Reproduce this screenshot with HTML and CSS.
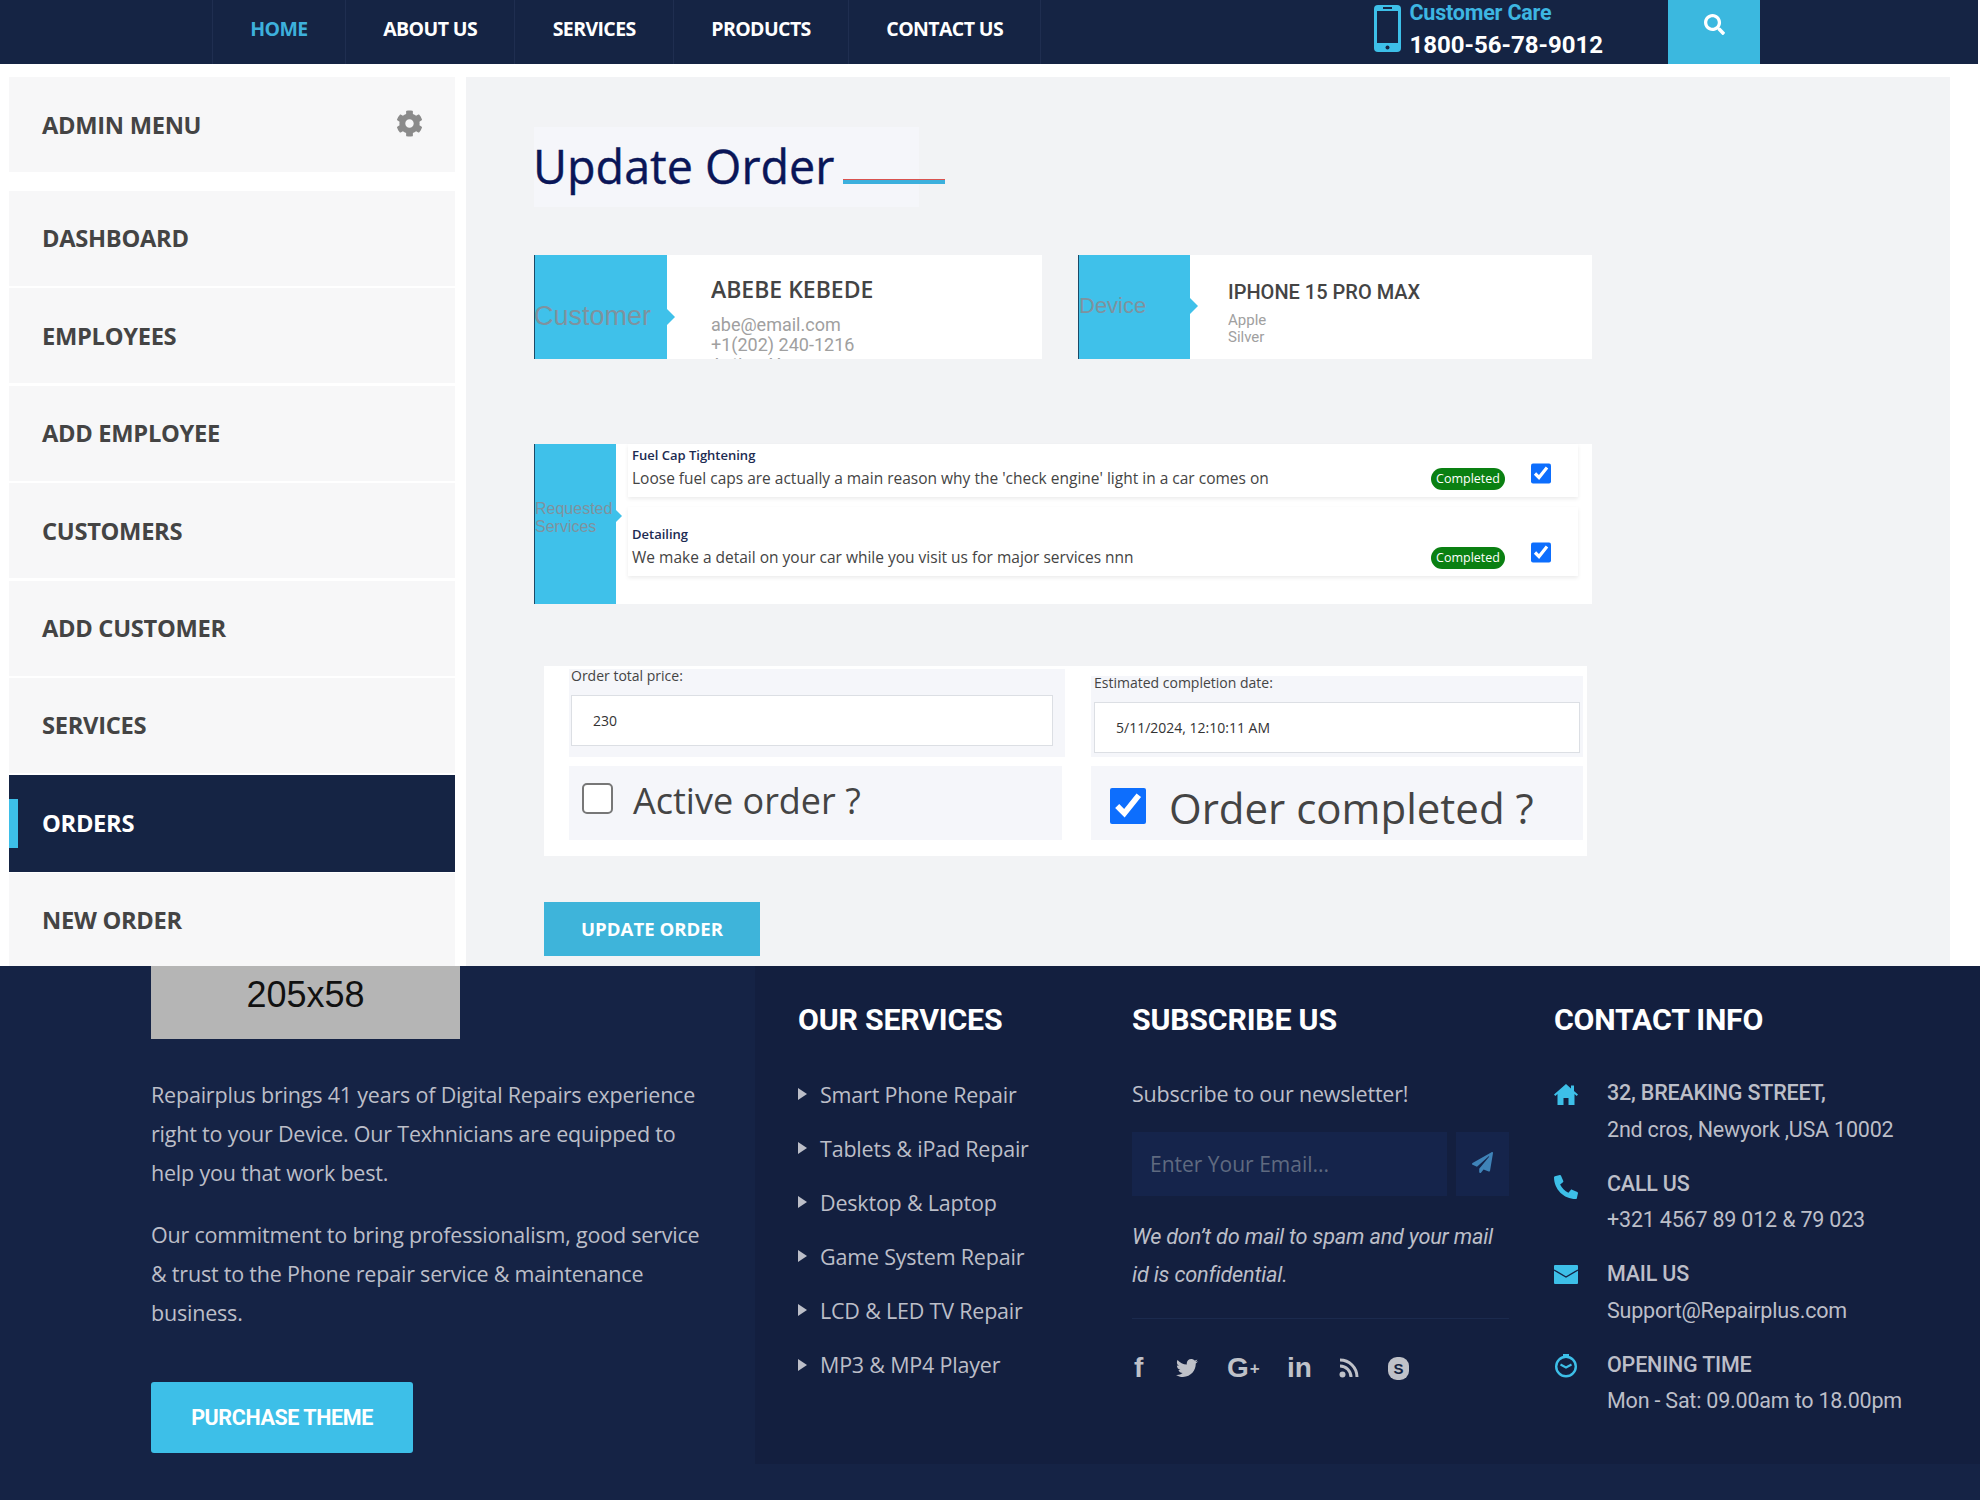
FILE: index.html
```html
<!DOCTYPE html>
<html>
<head>
    <title>Update Order</title>
    <link rel="stylesheet" href="styles.css">
</head>
<body>

    <header class="topbar">
        <nav class="topnav">
            <a class="topnav-item active" href="#">HOME</a>
            <a class="topnav-item" href="#">ABOUT US</a>
            <a class="topnav-item" href="#">SERVICES</a>
            <a class="topnav-item" href="#">PRODUCTS</a>
            <a class="topnav-item" href="#">CONTACT US</a>
        </nav>
        <div class="care">
            <svg class="care-icon" viewBox="0 0 27 47">
                <rect width="27" height="47" rx="4" fill="#3dbfe8"/>
                <rect x="3" y="6" width="21" height="32" fill="#152444"/>
                <rect x="9" y="2" width="9" height="2" fill="#152444"/>
                <circle cx="13.5" cy="42.5" r="2" fill="#152444"/>
            </svg>
            <div>
                <div class="care-label">Customer Care</div>
                <div class="care-number">1800-56-78-9012</div>
            </div>
        </div>
        <button class="search-btn">
            <svg viewBox="0 0 512 512" width="21" height="21"><path fill="#fff" d="M505 442.7L405.3 343c-4.5-4.5-10.6-7-17-7H372c27.6-35.3 44-79.7 44-128C416 93.1 322.9 0 208 0S0 93.1 0 208s93.1 208 208 208c48.3 0 92.7-16.4 128-44v16.3c0 6.4 2.5 12.5 7 17l99.7 99.7c9.4 9.4 24.6 9.4 33.9 0l28.3-28.3c9.4-9.4 9.4-24.6.1-34zM208 336c-70.7 0-128-57.2-128-128 0-70.7 57.2-128 128-128 70.7 0 128 57.2 128 128 0 70.7-57.2 128-128 128z"/></svg>
        </button>
    </header>

    <div class="page">
        <aside class="sidebar">
            <div class="admin-head">
                <span>ADMIN MENU</span>
                <svg viewBox="0 0 512 512" width="27" height="27"><path fill="#8b8b8b" d="M487.4 315.7l-42.6-24.6c4.3-23.2 4.3-47 0-70.2l42.6-24.6c4.9-2.8 7.1-8.6 5.5-14-11.1-35.6-30-67.8-54.7-94.6-3.8-4.1-10-5.1-14.8-2.3L380.8 110c-17.9-15.4-38.5-27.3-60.8-35.1V25.8c0-5.6-3.9-10.5-9.4-11.7-36.7-8.2-74.3-7.8-109.2 0-5.5 1.2-9.4 6.1-9.4 11.7V75c-22.2 7.9-42.8 19.8-60.8 35.1L88.7 85.5c-4.9-2.8-11-1.9-14.8 2.3-24.7 26.7-43.6 58.9-54.7 94.6-1.7 5.4.6 11.2 5.5 14L67.3 221c-4.3 23.2-4.3 47 0 70.2l-42.6 24.6c-4.9 2.8-7.1 8.6-5.5 14 11.1 35.6 30 67.8 54.7 94.6 3.8 4.1 10 5.1 14.8 2.3l42.6-24.6c17.9 15.4 38.5 27.3 60.8 35.1v49.2c0 5.6 3.9 10.5 9.4 11.7 36.7 8.2 74.3 7.8 109.2 0 5.5-1.2 9.4-6.1 9.4-11.7v-49.2c22.2-7.9 42.8-19.8 60.8-35.1l42.6 24.6c4.9 2.8 11 1.9 14.8-2.3 24.7-26.7 43.6-58.9 54.7-94.6 1.5-5.5-.7-11.3-5.6-14.1zM256 336c-44.1 0-80-35.9-80-80s35.9-80 80-80 80 35.9 80 80-35.9 80-80 80z"/></svg>
            </div>
            <a class="side-item" href="#">DASHBOARD</a>
            <a class="side-item" href="#">EMPLOYEES</a>
            <a class="side-item" href="#">ADD EMPLOYEE</a>
            <a class="side-item" href="#">CUSTOMERS</a>
            <a class="side-item" href="#">ADD CUSTOMER</a>
            <a class="side-item" href="#">SERVICES</a>
            <a class="side-item current" href="#">ORDERS</a>
            <a class="side-item" href="#">NEW ORDER</a>
        </aside>

        <main class="content">
            <div class="title-box">
                <h2>Update Order</h2>
                <span class="title-line"></span>
            </div>

            <div class="info-row">
                <section class="info-card customer">
                    <div class="tag tag-customer">Customer</div>
                    <div class="info-body">
                        <h3>ABEBE KEBEDE</h3>
                        <p>abe@email.com</p>
                        <p>+1(202) 240-1216</p>
                        <p>Active: Yes</p>
                    </div>
                </section>
                <section class="info-card device">
                    <div class="tag tag-device">Device</div>
                    <div class="info-body">
                        <h3>IPHONE 15 PRO MAX</h3>
                        <p>Apple</p>
                        <p>Silver</p>
                    </div>
                </section>
            </div>

            <section class="services-card">
                <div class="tag tag-services">Requested<br>Services</div>
                <div class="service-list">
                    <div class="service first">
                        <div class="service-text">
                            <h4>Fuel Cap Tightening</h4>
                            <p>Loose fuel caps are actually a main reason why the 'check engine' light in a car comes on</p>
                        </div>
                        <span class="badge">Completed</span>
                        <input class="service-check" type="checkbox" checked>
                    </div>
                    <div class="service second">
                        <div class="service-text">
                            <h4>Detailing</h4>
                            <p>We make a detail on your car while you visit us for major services nnn</p>
                        </div>
                        <span class="badge">Completed</span>
                        <input class="service-check" type="checkbox" checked>
                    </div>
                </div>
            </section>

            <form class="order-form">
                <div class="field field-price">
                    <label>Order total price:</label>
                    <input type="text" value="230">
                </div>
                <div class="field field-date">
                    <label>Estimated completion date:</label>
                    <input type="text" value="5/11/2024, 12:10:11 AM">
                </div>
                <label class="toggle toggle-active">
                    <input type="checkbox">
                    <span>Active order ?</span>
                </label>
                <label class="toggle toggle-done">
                    <input type="checkbox" checked>
                    <span>Order completed ?</span>
                </label>
            </form>

            <button class="update-btn">UPDATE ORDER</button>
        </main>
    </div>

    <footer class="footer">
        <div class="footer-about">
            <div class="logo-box">205x58</div>
            <p>Repairplus brings 41 years of Digital Repairs experience right to your Device. Our Texhnicians are equipped to help you that work best.</p>
            <p class="about-second">Our commitment to bring professionalism, good service &amp; trust to the Phone repair service &amp; maintenance business.</p>
            <a class="purchase-btn" href="#">PURCHASE THEME</a>
        </div>

        <div class="footer-panel">
            <div class="footer-services">
                <h3>OUR SERVICES</h3>
                <ul>
                    <li>Smart Phone Repair</li>
                    <li>Tablets &amp; iPad Repair</li>
                    <li>Desktop &amp; Laptop</li>
                    <li>Game System Repair</li>
                    <li>LCD &amp; LED TV Repair</li>
                    <li>MP3 &amp; MP4 Player</li>
                </ul>
            </div>

            <div class="footer-subscribe">
                <h3>SUBSCRIBE US</h3>
                <p class="sub-lead">Subscribe to our newsletter!</p>
                <div class="sub-form">
                    <input type="text" placeholder="Enter Your Email...">
                    <button>
                        <svg viewBox="0 0 512 512" width="21" height="21"><path fill="#3f83b8" d="M476 3.2L12.5 270.6c-18.1 10.4-15.8 35.6 2.2 43.2L121 358.4l287.3-253.2c5.5-4.9 13.3 2.6 8.6 8.3L176 407v80.5c0 23.6 28.5 32.9 42.5 15.8L282 426l124.6 52.2c14.2 6 30.4-2.9 33-18.2l72-432C515 7.8 493.3-6.8 476 3.2z"/></svg>
                    </button>
                </div>
                <p class="sub-note">We don’t do mail to spam and your mail id is confidential.</p>
                <div class="social">
                    <span class="social-f">f</span>
                    <svg class="social-tw" viewBox="0 0 512 512" width="22" height="22"><path fill="#bfc1c8" d="M459.37 151.716c.325 4.548.325 9.097.325 13.645 0 138.72-105.583 298.558-298.558 298.558-59.452 0-114.68-17.219-161.137-47.106 8.447.974 16.568 1.299 25.34 1.299 49.055 0 94.213-16.568 130.274-44.832-46.132-.975-84.792-31.188-98.112-72.772 6.498.974 12.995 1.624 19.818 1.624 9.421 0 18.843-1.3 27.614-3.573-48.081-9.747-84.143-51.98-84.143-102.985v-1.299c13.969 7.797 30.214 12.67 47.431 13.319-28.264-18.843-46.781-51.005-46.781-87.391 0-19.492 5.197-37.36 14.294-52.954 51.655 63.675 129.3 105.258 216.365 109.807-1.624-7.797-2.599-15.918-2.599-24.04 0-57.828 46.782-104.934 104.934-104.934 30.213 0 57.502 12.67 76.67 33.137 23.715-4.548 46.456-13.32 66.599-25.34-7.798 24.366-24.366 44.833-46.132 57.827 21.117-2.273 41.584-8.122 60.426-16.243-14.292 20.791-32.161 39.308-52.628 54.253z"/></svg>
                    <span class="social-g">G<span class="social-plus">+</span></span>
                    <span class="social-in">in</span>
                    <svg class="social-rss" viewBox="0 0 20 20" width="20" height="20">
                        <circle cx="3.5" cy="16.5" r="3" fill="#bfc1c8"/>
                        <path fill="none" stroke="#bfc1c8" stroke-width="3" d="M1 8a11 11 0 0 1 11 11M1 2a17 17 0 0 1 17 17"/>
                    </svg>
                    <span class="social-sk">S</span>
                </div>
            </div>

            <div class="footer-contact">
                <h3>CONTACT INFO</h3>
                <div class="contact-row">
                    <svg viewBox="0 0 24 21" width="24" height="21"><path fill="#3dbfe8" d="M12 0L0 10.5l1.3 1.5L3.5 10v11h6v-7h5v7h6V10l2.2 2 1.3-1.5L20 7V1.5h-3v3z"/></svg>
                    <div><strong>32, BREAKING STREET,</strong><br>2nd cros, Newyork ,USA 10002</div>
                </div>
                <div class="contact-row">
                    <svg viewBox="0 0 512 512" width="24" height="24"><g transform="translate(512 0) scale(-1 1)"><path fill="#3dbfe8" d="M493.4 24.6l-104-24c-11.3-2.6-22.9 3.3-27.5 13.9l-48 112c-4.2 9.8-1.4 21.3 6.9 28l60.6 49.6c-36 76.7-98.9 140.5-177.2 177.2l-49.6-60.6c-6.8-8.3-18.2-11.1-28-6.9l-112 48C3.9 366.5-2 378.1.6 389.4l24 104C27.1 504.2 36.7 512 48 512c256.1 0 464-207.5 464-464 0-11.2-7.7-20.9-18.6-23.4z"/></g></svg>
                    <div><strong>CALL US</strong><br>+321 4567 89 012 &amp; 79 023</div>
                </div>
                <div class="contact-row">
                    <svg viewBox="0 0 24 19" width="24" height="19">
                        <rect width="24" height="19" rx="1" fill="#3dbfe8"/>
                        <path fill="none" stroke="#152345" stroke-width="1.4" d="M0 5l12 7 12-7"/>
                    </svg>
                    <div><strong>MAIL US</strong><br>Support@Repairplus.com</div>
                </div>
                <div class="contact-row">
                    <svg viewBox="0 0 24 24" width="24" height="24">
                        <circle cx="12" cy="12.5" r="9.8" fill="none" stroke="#3dbfe8" stroke-width="2.4"/>
                        <path fill="none" stroke="#3dbfe8" stroke-width="2" d="M6.5 10.5l5.5 3 5.5-3"/>
                        <rect x="9" y="0" width="6" height="2" fill="#3dbfe8"/>
                    </svg>
                    <div><strong>OPENING TIME</strong><br>Mon - Sat: 09.00am to 18.00pm</div>
                </div>
            </div>
        </div>
    </footer>

</body>
</html>
```

FILE: styles.css
```css
* {
    box-sizing: border-box;
}

body {
    margin: 0;
    background-color: #fff;
    font-family: "Open Sans", sans-serif;
}

a {
    text-decoration: none;
}

h2, h3, h4, p {
    margin: 0;
}

/* top bar */
.topbar {
    display: flex;
    height: 64px;
    margin-right: 2px;
    padding-left: 212px;
    background-color: #152444;
}

.topnav {
    display: flex;
    width: 1162px;
}

.topnav-item {
    display: flex;
    justify-content: center;
    height: 64px;
    padding: 0 37.3px;
    border-left: 1px solid #1f2e50;
    color: #fff;
    font-size: 19.5px;
    font-weight: 700;
    letter-spacing: -0.6px;
    line-height: 58px;
}

.topnav-item:nth-child(5) {
    border-right: 1px solid #1f2e50;
}

.topnav-item.active {
    color: #3db0dc;
}

.care {
    display: flex;
    gap: 8.5px;
    width: 294px;
    padding-top: 5px;
}

.care-icon {
    width: 27px;
    height: 47px;
}

.care-label {
    margin-top: -5px;
    color: #3db6e2;
    font-family: Roboto, sans-serif;
    font-size: 21.5px;
    font-weight: 700;
    line-height: 25px;
    letter-spacing: -0.2px;
}

.care-number {
    margin-top: 5px;
    color: #fff;
    font-family: Roboto, sans-serif;
    font-size: 24px;
    font-weight: 700;
    line-height: 30px;
}

.search-btn {
    width: 92px;
    height: 64px;
    padding: 0 0 12px;
    border: none;
    background-color: #3bb8df;
}

/* sidebar + main */
.page {
    display: flex;
    height: 902px;
    padding: 13px 0 0 9px;
    overflow: hidden;
}

.sidebar {
    display: flex;
    flex-direction: column;
    gap: 2.4px;
    width: 446px;
    flex-shrink: 0;
}

.admin-head {
    display: flex;
    align-items: center;
    justify-content: space-between;
    flex-shrink: 0;
    height: 95px;
    margin-bottom: 16.6px;
    padding: 0 32px 0 33px;
    background-color: #f7f7f8;
    color: #444;
    font-size: 23.7px;
    font-weight: 700;
    letter-spacing: -0.3px;
}

.admin-head svg {
    margin-bottom: 3px;
}

.side-item {
    display: flex;
    align-items: center;
    flex-shrink: 0;
    height: 95px;
    padding-left: 33px;
    background-color: #f7f7f8;
    color: #444;
    font-size: 23.7px;
    font-weight: 700;
    letter-spacing: -0.3px;
}

.side-item.current {
    position: relative;
    height: 96.5px;
    margin-bottom: -1.5px;
    padding-bottom: 1px;
    background-color: #152444;
    color: #fff;
}

.side-item.current::before {
    content: "";
    position: absolute;
    left: 0;
    top: 24px;
    width: 9px;
    height: 49px;
    background-color: #3dbfe8;
}

.content {
    width: 1484px;
    margin-left: 11px;
    padding: 50px 0 0 68px;
    background-color: #f2f3f5;
}

.title-box {
    display: flex;
    align-items: center;
    width: 385px;
    height: 80px;
    padding-bottom: 2px;
    background-color: #f5f6fa;
}

.title-box h2 {
    flex-shrink: 0;
    margin-left: -1px;
    color: #0a1658;
    font-size: 46.7px;
    font-weight: 400;
    white-space: nowrap;
    -webkit-text-stroke: 0.4px #0a1658;
}

.title-line {
    flex-shrink: 0;
    width: 102px;
    height: 5px;
    margin: 30px 0 0 9px;
    border-top: 1px solid #d9534f;
    background-color: #3cb0dd;
}

/* customer + device cards */
.info-row {
    display: flex;
    gap: 36px;
    margin-top: 48px;
}

.info-card {
    display: flex;
    height: 104px;
    overflow: hidden;
    background-color: #fff;
}

.customer {
    width: 508px;
}

.device {
    width: 514px;
}

.tag {
    position: relative;
    flex-shrink: 0;
    border-left: 1px solid #1c4a66;
    background-color: #3fc1ea;
    color: #7f929e;
    font-family: "Liberation Sans", sans-serif;
}

.tag::after {
    content: "";
    position: absolute;
    left: 100%;
    border: 8px solid transparent;
    border-left-color: #3fc1ea;
    border-right-width: 0;
}

.tag-customer {
    width: 133px;
    padding-top: 45px;
    font-size: 27px;
    line-height: 32px;
    text-indent: -1px;
}

.tag-customer::after {
    top: 54px;
}

.tag-device {
    width: 112px;
    padding-top: 38px;
    font-size: 22px;
    line-height: 26px;
}

.tag-device::after {
    top: 43px;
}

.info-body {
    margin-left: 44px;
    padding-top: 21px;
    overflow: hidden;
    color: #a0a0a0;
    font-family: Roboto, sans-serif;
}

.customer .info-body {
    font-size: 18px;
    line-height: 20px;
}

.customer .info-body h3 {
    margin-bottom: 13px;
    color: #444;
    font-family: "Open Sans", sans-serif;
    font-size: 23px;
    font-weight: 600;
    line-height: 26px;
}

.device .info-body {
    margin-left: 38px;
    padding-top: 25px;
    font-size: 15px;
    line-height: 17px;
}

.device .info-body h3 {
    margin-bottom: 8px;
    color: #444;
    font-size: 20px;
    font-weight: 500;
    line-height: 24px;
}

/* requested services */
.services-card {
    display: flex;
    width: 1058px;
    height: 160px;
    margin-top: 85px;
    background-color: #fff;
}

.tag-services {
    width: 82px;
    padding-top: 56px;
    font-size: 16px;
    line-height: 18px;
}

.tag-services::after {
    top: 66px;
    border-width: 6px;
    border-right-width: 0;
}

.service-list {
    width: 950px;
    margin-left: 12px;
}

.service {
    display: flex;
    align-items: flex-end;
    padding: 2px 27px 7px 4px;
    box-shadow: 0 2px 4px rgba(0, 0, 0, 0.08);
    background-color: #fff;
}

.service.first {
    height: 53px;
}

.service.second {
    height: 69px;
    margin-top: 10px;
    padding-top: 18px;
}

.service-text {
    flex: 1;
    align-self: flex-start;
}

.service h4 {
    color: #1c2b52;
    font-size: 13px;
    font-weight: 600;
    line-height: 18px;
}

.service p {
    margin-top: 2px;
    color: #444;
    font-size: 15.5px;
    line-height: 24px;
}

.badge {
    width: 74px;
    height: 22px;
    border-radius: 11px;
    background-color: #0a8012;
    color: #fff;
    font-size: 12.5px;
    line-height: 22px;
    text-align: center;
}

.service-check {
    width: 20px;
    height: 21px;
    margin: 0 0 6px 26px;
    accent-color: #0d6efd;
}

/* order form */
.order-form {
    display: grid;
    grid-template-columns: 496px 492px;
    align-content: start;
    align-items: end;
    column-gap: 26px;
    row-gap: 9px;
    width: 1043px;
    height: 190px;
    margin: 62px 0 0 10px;
    padding: 3px 0 0 25px;
    background-color: #fff;
}

.field {
    background-color: #f5f6fa;
    font-size: 14px;
}

.field label {
    display: block;
    height: 26px;
    color: #444;
    line-height: 13px;
}

.field input {
    display: block;
    width: 100%;
    height: 51px;
    padding: 0 0 0 21px;
    border: 1px solid #dcdfe4;
    background-color: #fff;
    color: #333;
    font-family: "Open Sans", sans-serif;
    font-size: 14px;
}

.field-price {
    padding: 0 12px 11px 2px;
}

.field-date {
    padding: 0 3px 4px 3px;
}

.toggle {
    display: flex;
    align-items: center;
    height: 74px;
    background-color: #f5f6fa;
    color: #444;
}

.toggle-active {
    width: 493px;
    padding-left: 13px;
    font-size: 36px;
}

.toggle-active input {
    width: 31px;
    height: 31px;
    margin: 0 20px 10px 0;
    border: 2px solid #777;
    border-radius: 5px;
    background-color: #fff;
    appearance: none;
}

.toggle-active span {
    margin-bottom: 6px;
}

.toggle-done {
    padding-left: 19px;
    font-size: 42px;
}

.toggle-done input {
    width: 36px;
    height: 36px;
    margin: 6px 23px 0 0;
    accent-color: #0d6efd;
}

.toggle-done span {
    margin-top: 8px;
}

.update-btn {
    width: 216px;
    height: 54px;
    margin: 46px 0 0 10px;
    padding-bottom: 3px;
    border: none;
    background-color: #3eb4da;
    color: #fff;
    font-family: "Open Sans", sans-serif;
    font-size: 18.6px;
    font-weight: 700;
}

/* footer */
.footer {
    display: flex;
    height: 534px;
    background-color: #152345;
    color: #bcbec8;
}

.footer-about {
    width: 755px;
    padding-left: 151px;
    font-size: 21.5px;
    line-height: 39px;
}

.footer-about p {
    width: 560px;
    letter-spacing: -0.2px;
}

.logo-box {
    width: 309px;
    height: 72.5px;
    margin-bottom: 36px;
    background-color: #b5b5b5;
    color: #111;
    font-family: "Liberation Sans", sans-serif;
    font-size: 36px;
    line-height: 58px;
    text-align: center;
}

.about-second {
    margin-top: 23px;
}

.purchase-btn {
    display: block;
    width: 262px;
    height: 71.5px;
    margin-top: 50px;
    border-radius: 3px;
    background-color: #3dbfe8;
    color: #fff;
    font-family: Roboto, sans-serif;
    font-size: 21.5px;
    font-weight: 700;
    letter-spacing: -0.4px;
    line-height: 71px;
    text-align: center;
}

.footer-panel {
    display: flex;
    flex: 1;
    height: 498px;
    padding: 34px 0 0 43px;
    background-color: #131f3f;
}

.footer-panel h3 {
    color: #fff;
    font-family: Roboto, sans-serif;
    font-size: 30.3px;
    font-weight: 700;
    line-height: 40px;
    letter-spacing: -0.2px;
}

.footer-services {
    width: 334px;
}

.footer-services ul {
    margin: 27px 0 0;
    padding: 0;
    list-style-type: none;
}

.footer-services li {
    display: flex;
    align-items: center;
    height: 54.1px;
    font-size: 21.5px;
    letter-spacing: -0.2px;
}

.footer-services li::before {
    content: "";
    margin-right: 13px;
    border: 6px solid transparent;
    border-left: 9px solid #bcbec8;
    border-right-width: 0;
}

.footer-subscribe {
    width: 377px;
}

.sub-lead {
    margin-top: 27px;
    font-size: 21.5px;
    line-height: 54px;
    letter-spacing: -0.2px;
}

.sub-form {
    display: flex;
    gap: 8.5px;
    margin-top: 11px;
}

.sub-form input {
    width: 315px;
    height: 64px;
    padding: 0 0 0 18px;
    border: none;
    background-color: #15244b;
    font-family: "Open Sans", sans-serif;
    font-size: 21px;
}

.sub-form input::placeholder {
    color: #5f6a80;
}

.sub-form button {
    width: 53.5px;
    height: 64px;
    padding: 0;
    border: none;
    background-color: #15244b;
}

.sub-note {
    margin-top: 22px;
    padding-bottom: 24px;
    border-bottom: 1px solid #1b2a4e;
    font-family: Roboto, sans-serif;
    font-size: 21.7px;
    font-style: italic;
    line-height: 38px;
    letter-spacing: -0.2px;
}

.social {
    display: flex;
    align-items: center;
    height: 26px;
    margin-top: 36px;
    padding-left: 2px;
    color: #bfc1c8;
    font-family: "Liberation Sans", sans-serif;
    font-weight: 700;
    line-height: 26px;
}

.social-f {
    width: 42px;
    font-size: 28px;
}

.social-tw {
    margin-right: 29px;
}

.social-g {
    width: 60px;
    font-size: 28px;
}

.social-plus {
    margin-left: 1px;
    font-size: 17px;
    vertical-align: 3px;
}

.social-in {
    width: 52px;
    font-size: 28px;
}

.social-rss {
    margin-right: 29px;
}

.social-sk {
    width: 21px;
    height: 23px;
    border-radius: 9px;
    background-color: #bfc1c8;
    color: #131f3f;
    font-size: 15px;
    line-height: 23px;
    text-align: center;
}

.footer-contact {
    margin-left: 45px;
    font-family: Roboto, sans-serif;
    font-size: 21.5px;
    line-height: 36.5px;
}

.footer-contact h3 {
    margin-bottom: 35px;
}

.contact-row {
    display: flex;
    gap: 29px;
    height: 73px;
    margin-bottom: 17.5px;
    letter-spacing: -0.2px;
}

.contact-row svg {
    flex-shrink: 0;
    margin-top: 9px;
}

.contact-row:last-child svg {
    margin-top: 7px;
}

.contact-row strong {
    font-weight: 500;
}
```
